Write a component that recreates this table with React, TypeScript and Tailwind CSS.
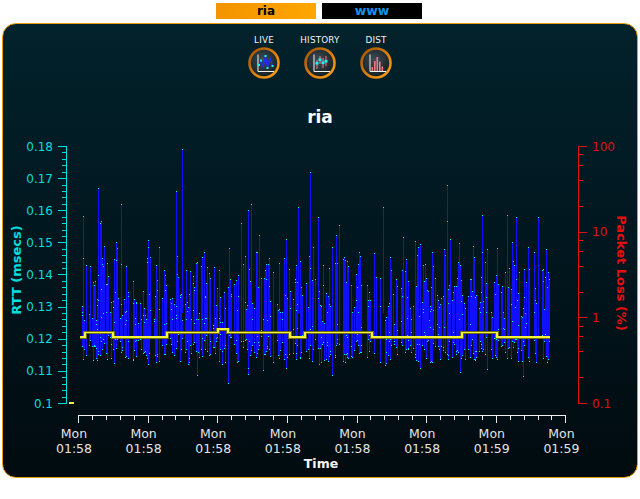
import React from 'react';

// seeded generator so the plot is the same on every load
function makeRng(seed: number) {
  let s = seed >>> 0;
  return () => {
    s = (Math.imul(s, 1664525) + 1013904223) >>> 0;
    return s / 4294967296;
  };
}

const yv = (v: number) => 146 + ((0.18 - v) / 0.01) * 32.125;
const yl = (p: number) => 146 + (2 - Math.log10(p)) * 85.67;

// the few tall outliers seen in the capture
const spikes: [number, number][] = [
  [98, 0.167],
  [121, 0.162],
  [176, 0.166],
  [182, 0.179],
  [298, 0.161],
  [310, 0.172],
  [318, 0.158],
  [383, 0.161],
  [447, 0.168],
  [516, 0.158],
];

const buildSeries = () => {
  const r = makeRng(2024);
  let bars = '';
  let dots = '';
  const dot = (x: number, v: number) => {
    dots += `M${x} ${Math.round(yv(v))}h1v1h-1z`;
  };
  for (let x = 81; x <= 549; x++) {
    if (r() < 0.32) continue;
    const wave = Math.max(0, Math.sin((2 * Math.PI * x) / 14.2 + Math.sin(x / 37) * 1.5));
    const dip = r() < 0.2 ? r() * 0.007 : 0;
    const lo = 0.1125 + r() * 0.009 - dip;
    let hi = 0.124 + r() * 0.02 + wave * r() * 0.014;
    if (r() < 0.1) hi += r() * 0.02;
    if (r() < 0.02) hi += 0.012;
    bars += `M${x + 0.5} ${yv(hi).toFixed(1)}V${yv(lo).toFixed(1)}`;
    dot(x, hi);
    dot(x, lo);
    if (r() < 0.4) dot(x, lo + r() * (hi - lo));
    if (r() < 0.25) dot(x, lo + r() * 0.012);
  }
  spikes.forEach(([x, v]) => {
    bars += `M${x + 0.5} ${yv(v).toFixed(1)}V${yv(0.128).toFixed(1)}`;
    dot(x, v);
  });
  return { bars, dots };
};

const series = buildSeries();

const steps: [number, number, number][] = [
  [80, 85, 0.1205],
  [85, 113, 0.122],
  [113, 167, 0.1205],
  [167, 218, 0.122],
  [218, 228, 0.123],
  [228, 290, 0.122],
  [290, 305, 0.1205],
  [305, 372, 0.122],
  [372, 462, 0.1205],
  [462, 497, 0.122],
  [497, 550, 0.1205],
];

const stepPath = steps
  .map(([a, b, v], i) => `${i === 0 ? 'M' : 'L'}${a} ${yv(v).toFixed(1)}L${b} ${yv(v).toFixed(1)}`)
  .join('');

const xMajor = Array.from({ length: 8 }, (_, i) => 78 + i * 69.63);
const xLabels = ['01:58', '01:58', '01:58', '01:58', '01:58', '01:58', '01:59', '01:59'];

const Chart = () => {
  const cyan = '#00dede';
  const red = '#e01010';
  const leftMinor: number[] = [];
  for (let i = 0; i <= 40; i++) leftMinor.push(0.1 + i * 0.002);
  const rightMinor = [80, 60, 40, 20, 8, 6, 4, 2, 0.8, 0.6, 0.4, 0.2];
  const xMinor: number[] = [];
  for (let i = 0; i <= 35; i++) xMinor.push(78 + i * 13.926);

  return (
    <svg width={634} height={347} viewBox="3 130 634 347" className="block" shapeRendering="crispEdges">
      {/* left axis */}
      <line x1={66.5} y1={146} x2={66.5} y2={403.5} stroke={cyan} />
      {leftMinor.map((v, i) => (
        <line key={i} x1={i % 5 === 0 ? 58 : 62} x2={67} y1={Math.round(yv(v)) + 0.5} y2={Math.round(yv(v)) + 0.5} stroke={cyan} />
      ))}
      {[0.18, 0.17, 0.16, 0.15, 0.14, 0.13, 0.12, 0.11, 0.1].map((v) => (
        <text key={v} x={53} y={yv(v) + 4.5} textAnchor="end" fontSize={12} fill={cyan} shapeRendering="auto">
          {v === 0.1 ? '0.1' : v.toFixed(2)}
        </text>
      ))}
      <text transform="translate(21 270) rotate(-90)" textAnchor="middle" fontSize={13} fontWeight="bold" fill={cyan}>
        RTT (msecs)
      </text>

      {/* right axis */}
      <line x1={578.5} y1={146} x2={578.5} y2={403.5} stroke={red} />
      {[100, 10, 1, 0.1].map((p) => (
        <line key={p} x1={578} x2={587} y1={Math.round(yl(p)) + 0.5} y2={Math.round(yl(p)) + 0.5} stroke={red} />
      ))}
      {rightMinor.map((p) => (
        <line key={p} x1={578} x2={583} y1={Math.round(yl(p)) + 0.5} y2={Math.round(yl(p)) + 0.5} stroke={red} />
      ))}
      {[100, 10, 1, 0.1].map((p) => (
        <text key={p} x={592} y={yl(p) + 4.5} fontSize={12} fill={red}>
          {p}
        </text>
      ))}
      <text transform="translate(617 273) rotate(90)" textAnchor="middle" fontSize={13} fontWeight="bold" fill={red}>
        Packet Loss (%)
      </text>

      {/* bottom axis */}
      <line x1={78} y1={415.5} x2={566} y2={415.5} stroke="#f0f0f0" />
      {xMinor.map((x, i) => (
        <line key={i} x1={Math.round(x) + 0.5} x2={Math.round(x) + 0.5} y1={415} y2={i % 5 === 0 ? 423 : 420} stroke="#f0f0f0" />
      ))}
      {xMajor.map((x, i) => (
        <g key={i} fill="#e4e4e4" fontSize={12.5}>
          <text x={x - 4} y={438} textAnchor="middle">
            Mon
          </text>
          <text x={x - 4} y={453} textAnchor="middle">
            {xLabels[i]}
          </text>
        </g>
      ))}
      <text x={321} y={468} textAnchor="middle" fontSize={12.5} fontWeight="bold" fill="#f4f4f4">
        Time
      </text>

      {/* data */}
      <path d={series.bars} stroke="#1010ff" strokeWidth={1} fill="none" />
      <path d={series.dots} fill="#10e8f0" />
      <path d={stepPath} stroke="#6f6f12" strokeWidth={3.2} fill="none" />
      <path d={stepPath} stroke="#f2f23a" strokeWidth={1.6} fill="none" />
      <rect x={69} y={402} width={5} height={2} fill="#e8f040" />
    </svg>
  );
};

const IconRing = ({ id, children }: { id: string; children: React.ReactNode }) => (
  <svg width={32} height={32} viewBox="0 0 32 32">
    <defs>
      <radialGradient id={`fill-${id}`} cx="0.45" cy="0.4" r="0.6">
        <stop offset="0" stopColor="#3d4e55" />
        <stop offset="1" stopColor="#141d21" />
      </radialGradient>
      <linearGradient id={`ring-${id}`} x1="0" y1="0" x2="1" y2="1">
        <stop offset="0" stopColor="#a05000" />
        <stop offset="0.6" stopColor="#e08410" />
        <stop offset="1" stopColor="#f4a020" />
      </linearGradient>
    </defs>
    <circle cx={16} cy={16} r={14.5} fill={`url(#fill-${id})`} stroke={`url(#ring-${id})`} strokeWidth={2.6} />
    <path d="M10 7.5V24.5H26" stroke="#f4f4f4" strokeWidth={1} fill="none" />
    {children}
  </svg>
);

const LiveIcon = () => (
  <IconRing id="live">
    <path d="M11 18L13 13.5L15 20L17.5 9L19.5 21L22 11L24.5 19" stroke="#1a2cff" strokeWidth={1.2} fill="none" />
    {[
      [11, 18],
      [13, 13.5],
      [17.5, 9],
      [19.5, 21],
      [24.5, 19],
    ].map(([x, y], i) => (
      <rect key={i} x={x - 1} y={y - 1} width={2} height={2} fill="#20f0ff" />
    ))}
  </IconRing>
);

const HistoryIcon = () => (
  <IconRing id="hist">
    <g stroke="#f08080" strokeWidth={1}>
      <line x1={13} y1={13} x2={13} y2={22} />
      <line x1={16} y1={9} x2={16} y2={17} />
      <line x1={19} y1={11} x2={19} y2={21} />
      <line x1={22} y1={9} x2={22} y2={19} />
    </g>
    <rect x={11.5} y={15} width={3} height={2.5} fill="#20f0ff" />
    <rect x={14.5} y={11.5} width={3} height={2.5} fill="#20f0ff" />
    <rect x={17.5} y={14.5} width={3} height={2.5} fill="#20f0ff" />
    <rect x={20.5} y={13} width={3} height={2.5} fill="#20f0ff" />
  </IconRing>
);

const DistIcon = () => (
  <IconRing id="dist">
    <g fill="#f07c7c">
      <rect x={11.5} y={20} width={1.6} height={4} />
      <rect x={14} y={14} width={1.6} height={10} />
      <rect x={16.5} y={10} width={1.6} height={14} />
      <rect x={19} y={14.5} width={1.6} height={9.5} />
      <rect x={21.5} y={19.5} width={1.6} height={4.5} />
    </g>
  </IconRing>
);

const modes = [
  { label: 'LIVE', icon: <LiveIcon /> },
  { label: 'HISTORY', icon: <HistoryIcon /> },
  { label: 'DIST', icon: <DistIcon /> },
];

export default function App() {
  return (
    <div className="w-[640px] h-[499px] bg-white overflow-hidden" style={{ fontFamily: '"DejaVu Sans", Verdana, sans-serif' }}>
      {/* host tabs */}
      <div className="flex justify-center gap-[6px] pt-[3px] h-[23px] pr-[2px]">
        <div className="w-[100px] h-[16px] bg-linear-to-r from-[#f39400] to-[#ffa600] flex items-center justify-center text-[12px] font-bold text-black leading-none">
          ria
        </div>
        <div className="w-[100px] h-[16px] bg-black flex items-center justify-center text-[12.5px] font-bold text-[#1593e6] leading-none">
          www
        </div>
      </div>

      {/* main panel */}
      <div className="ml-[2px] w-[636px] h-[455px] rounded-[14px] border border-[#eb9a0a] bg-linear-to-b from-[#02222c] via-[#01161e] to-[#010b10] overflow-hidden flex flex-col">
        <div className="h-[106px] flex flex-col items-center pt-[10px]">
          <div className="flex">
            {modes.map((m) => (
              <div key={m.label} className="w-[56px] flex flex-col items-center">
                <div className="h-[12px] leading-[12px] text-[8.8px] text-[#f2f2f2] tracking-[0.2px]">{m.label}</div>
                <div className="mt-[1px]">{m.icon}</div>
              </div>
            ))}
          </div>
          <div className="mt-[28px] h-[20px] leading-[20px] text-[17px] font-bold text-white">ria</div>
        </div>
        <Chart />
      </div>
    </div>
  );
}
